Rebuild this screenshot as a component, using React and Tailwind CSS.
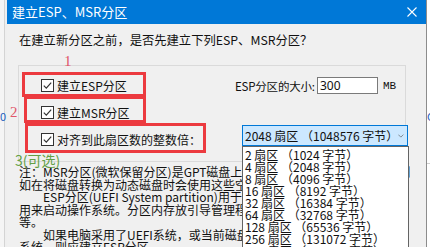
import React from "react";

const CJK = { fontFamily: '"Noto Sans CJK SC", "Noto Sans", sans-serif' };

function Check() {
  return (
    <span className="w-[13px] h-[13px] border border-[#333333] bg-white flex items-center justify-center shrink-0">
      <svg width="11" height="11" viewBox="0 0 11 11">
        <path d="M1.8 5.6 L4.3 8.2 L9.2 2.6" fill="none" stroke="#333333" strokeWidth="1.2" />
      </svg>
    </span>
  );
}

const items = [
  "2 扇区 （1024 字节）",
  "4 扇区 （2048 字节）",
  "8 扇区 （4096 字节）",
  "16 扇区 （8192 字节）",
  "32 扇区 （16384 字节）",
  "64 扇区 （32768 字节）",
  "128 扇区 （65536 字节）",
  "256 扇区 （131072 字节）",
  "512 扇区 （262144 字节）",
];

export default function App() {
  return (
    <div className="w-[430px] h-[247px] flex overflow-hidden bg-white relative text-[#111]" style={CJK}>
      {/* background window strip left */}
      <div className="w-[7px] h-full bg-[#efefef] flex shrink-0 overflow-hidden">
        <div className="w-[4px] h-full bg-[#f5f5f5]" />
        <div className="w-[1px] h-full bg-[#d4d4d4]" />
        <div className="w-[2px] h-full flex flex-col">
          <div className="h-[110px]" />
          <span className="text-[11px] leading-[12px] text-[#1f5fbf] ml-[-5px]">0</span>
        </div>
      </div>

      {/* dialog */}
      <div className="w-[420px] h-full flex flex-col border-r border-[#8c8c8c] shrink-0">
        <div className="h-[24px] bg-[#0078d7] flex items-center justify-between pl-[5px] pr-[9px] shrink-0">
          <span className="text-white text-[13px] leading-[16px]">建立ESP、MSR分区</span>
          <svg width="10" height="10" viewBox="0 0 10 10">
            <path d="M0.5 0.5 L9.5 9.5 M9.5 0.5 L0.5 9.5" stroke="#ffffff" strokeWidth="1.1" />
          </svg>
        </div>

        <div className="flex-1 bg-[#f0f0f0] pl-[12px] flex flex-col overflow-hidden">
          <div className="mt-[8px] text-[12.3px] leading-[16px] whitespace-nowrap">
            在建立新分区之前，是否先建立下列ESP、MSR分区？
          </div>

          {/* group box */}
          <div className="ml-[-1px] mt-[17px] w-[388px] h-[97px] border border-[#dadada] pt-[6px] flex flex-col shrink-0">
            <div className="h-[27px] flex items-center pl-[22px]">
              <div className="w-[194px] flex items-center shrink-0">
                <Check />
                <span className="ml-[3px] text-[12px] leading-[14px] whitespace-nowrap">建立ESP分区</span>
              </div>
              <span className="w-[82px] text-[11.5px] leading-[14px] whitespace-nowrap tracking-[-0.2px] shrink-0">ESP分区的大小:</span>
              <div className="w-[61px] h-[17px] bg-white border border-[#7a7a7a] flex items-center pl-[2px] shrink-0">
                <span className="text-[12px] leading-[14px]" style={{ fontFamily: '"Noto Sans", sans-serif' }}>300</span>
              </div>
              <span className="ml-[5px] text-[11px] leading-[14px]" style={{ fontFamily: '"Liberation Mono", monospace' }}>MB</span>
            </div>

            <div className="h-[27px] flex items-center pl-[22px]">
              <Check />
              <span className="ml-[3px] text-[12px] leading-[14px] whitespace-nowrap">建立MSR分区</span>
            </div>

            <div className="h-[27px] flex items-center pl-[22px]">
              <div className="w-[201px] flex items-center shrink-0">
                <Check />
                <span className="ml-[3px] text-[12px] leading-[14px] whitespace-nowrap">对齐到此扇区数的整数倍：</span>
              </div>
              <div className="relative self-start mt-[-1px] z-10">
                <div className="w-[166px] h-[21px] bg-[#cce8ff] border border-[#0078d7] flex items-center justify-between pl-[2px] pr-[3px]">
                  <span className="text-[12px] leading-[14px] whitespace-nowrap">2048 扇区 （1048576 字节）</span>
                  <svg width="9" height="6" viewBox="0 0 9 6">
                    <path d="M0.5 0.8 L4.5 4.8 L8.5 0.8" fill="none" stroke="#555" strokeWidth="1" />
                  </svg>
                </div>
                <div className="absolute left-0 top-[21px] w-[167px] h-[110px] bg-white border border-[#646464] pt-[2px] flex flex-col overflow-hidden">
                  {items.map((t) => (
                    <div key={t} className="h-[12px] leading-[12px] text-[12px] pl-[2px] whitespace-nowrap shrink-0">
                      {t}
                    </div>
                  ))}
                </div>
              </div>
            </div>
          </div>

          {/* note text */}
          <div className="mt-[4px] text-[12px] leading-[12.5px] whitespace-nowrap">
            <div>注：MSR分区(微软保留分区)是GPT磁盘上用于保留空间以备用的分区，例</div>
            <div>如在将磁盘转换为动态磁盘时会使用这些空间。</div>
            <div className="pl-[24px]">ESP分区(UEFI System partition)用于采用UEFI BIOS的电脑系统，</div>
            <div>用来启动操作系统。分区内存放引导管理程序、驱动程序、系统维护工具</div>
            <div>等。</div>
            <div className="pl-[24px]">如果电脑采用了UEFI系统，或当前磁盘将来可能用在UEFI系统上启动</div>
            <div>系统，则应建立ESP分区。</div>
          </div>
        </div>
      </div>

      {/* background window strip right */}
      <div className="w-[3px] h-full bg-white flex flex-col shrink-0 overflow-hidden">
        <div className="h-[110px]" />
        <span className="text-[11px] leading-[12px] text-[#1f5fbf]">C</span>
        <div className="h-[41px]" />
        <div className="h-[1px] bg-[#cfcfcf]" />
      </div>

      {/* annotations */}
      <div className="absolute left-[22px] top-[72px] w-[124px] h-[25px] border-[3px] border-[#ec3a3f]" />
      <div className="absolute left-[24px] top-[96px] w-[122px] h-[27px] border-[3px] border-[#ec3a3f]" />
      <div className="absolute left-[25px] top-[123px] w-[181px] h-[30px] border-[3px] border-[#ec3a3f]" />
      <span className="absolute left-[64px] top-[53px] text-[15px] leading-[16px] text-[#e0566a]" style={{ fontFamily: '"Liberation Serif", serif' }}>1</span>
      <span className="absolute left-[10px] top-[104px] text-[15px] leading-[16px] text-[#e0566a]" style={{ fontFamily: '"Liberation Serif", serif' }}>2</span>
      <span className="absolute left-[15px] top-[152px] text-[14px] leading-[16px] text-[#64a046]">3(可选)</span>
    </div>
  );
}
